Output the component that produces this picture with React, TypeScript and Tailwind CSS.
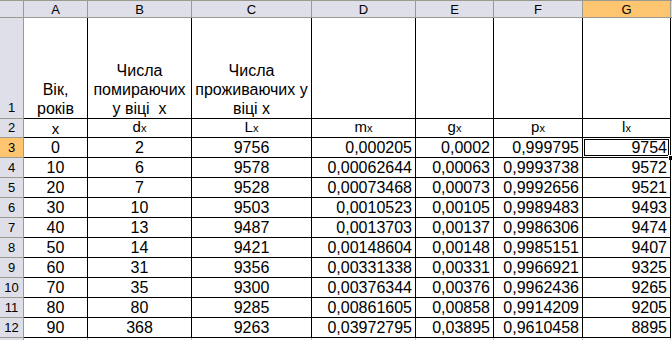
const font = { fontFamily: '"Liberation Sans", Arial, sans-serif' };

const colW = [
  "w-[64px]",
  "w-[104px]",
  "w-[120px]",
  "w-[104px]",
  "w-[78px]",
  "w-[89px]",
  "w-[88px]",
];
const letters = ["A", "B", "C", "D", "E", "F", "G"];

const rows: string[][] = [
  ["0", "2", "9756", "0,000205", "0,0002", "0,999795", "9754"],
  ["10", "6", "9578", "0,00062644", "0,00063", "0,9993738", "9572"],
  ["20", "7", "9528", "0,00073468", "0,00073", "0,9992656", "9521"],
  ["30", "10", "9503", "0,0010523", "0,00105", "0,9989483", "9493"],
  ["40", "13", "9487", "0,0013703", "0,00137", "0,9986306", "9474"],
  ["50", "14", "9421", "0,00148604", "0,00148", "0,9985151", "9407"],
  ["60", "31", "9356", "0,00331338", "0,00331", "0,9966921", "9325"],
  ["70", "35", "9300", "0,00376344", "0,00376", "0,9962436", "9265"],
  ["80", "80", "9285", "0,00861605", "0,00858", "0,9914209", "9205"],
  ["90", "368", "9263", "0,03972795", "0,03895", "0,9610458", "8895"],
];

const sub2 = [
  ["x", ""],
  ["d", "x"],
  ["L", "x"],
  ["m", "x"],
  ["g", "x"],
  ["p", "x"],
  ["l", "x"],
];

function RowHead({ n, active, h }: { n?: number; active?: boolean; h: string }) {
  return (
    <div
      className={`${h} w-[24px] shrink-0 border-r border-b border-[#9a9a8e] flex items-center justify-center text-[13px] ${
        active ? "bg-[#fdc570]" : "bg-[#dedfe9]"
      }`}
    >
      {n}
    </div>
  );
}

export default function App() {
  return (
    <div className="w-[672px] h-[340px] overflow-hidden bg-white text-black" style={font}>
      {/* column headers */}
      <div className="flex h-[18px] border-t border-b border-[#9a9a8e]">
        <div className="w-[24px] shrink-0 bg-[#dedfe9] border-r border-[#9a9a8e]" />
        {letters.map((l, i) => (
          <div
            key={l}
            className={`${colW[i]} shrink-0 border-r border-[#9a9a8e] flex items-center justify-center text-[13px] leading-none ${
              l === "G" ? "bg-[#fdc570]" : "bg-[#dedfe9]"
            }`}
          >
            {l}
          </div>
        ))}
        <div className="flex-1 bg-[#dedfe9]" />
      </div>

      {/* row 1 */}
      <div className="flex h-[101px]">
        <div className="w-[24px] h-full shrink-0 border-r border-b border-[#9a9a8e] bg-[#dedfe9] flex items-end justify-center pb-[1px] text-[13px]">
          1
        </div>
        <div className={`${colW[0]} shrink-0 border-r border-b border-black flex items-end justify-center text-center text-[16px] leading-[19px]`}>
          <span>
            Вік,
            <br />
            років
          </span>
        </div>
        <div className={`${colW[1]} shrink-0 border-r border-b border-black flex items-end justify-center text-center text-[16px] leading-[19px]`}>
          <span className="whitespace-pre">
            Числа
            <br />
            помираючих
            <br />
            {"у віці  х"}
          </span>
        </div>
        <div className={`${colW[2]} shrink-0 border-r border-b border-black flex items-end justify-center text-center text-[16px] leading-[19px]`}>
          <span>
            Числа
            <br />
            проживаючих у
            <br />
            віці х
          </span>
        </div>
        {[3, 4, 5, 6].map((i) => (
          <div key={i} className={`${colW[i]} shrink-0 border-r border-b border-black`} />
        ))}
        <div className="flex-1" />
      </div>

      {/* row 2 */}
      <div className="flex h-[19px]">
        <RowHead n={2} h="h-[19px]" />
        {sub2.map(([m, s], i) => (
          <div
            key={i}
            className={`${colW[i]} shrink-0 border-r border-b border-black flex items-end justify-center text-[15px] leading-[17px]`}
          >
            <span>
              {m}
              {s && <span className="text-[11px]">{s}</span>}
            </span>
          </div>
        ))}
        <div className="flex-1" />
      </div>

      {/* data rows */}
      {rows.map((r, ri) => (
        <div key={ri} className="flex h-[20px]">
          <RowHead n={ri + 3} active={ri === 0} h="h-[20px]" />
          {r.map((v, ci) => (
            <div
              key={ci}
              className={`${colW[ci]} relative shrink-0 border-r border-b border-black text-[16px] leading-[19px] whitespace-nowrap ${
                ci < 3 ? "text-center" : "text-right pr-[3px]"
              }`}
            >
              {v}
              {ri === 0 && ci === 6 && (
                <>
                  <div className="absolute -left-px -top-px -right-px -bottom-px border border-black shadow-[inset_0_0_0_1px_#fff,inset_0_0_0_2px_#000]" />
                  <div className="absolute -right-[4px] -bottom-[4px] w-[6px] h-[6px] bg-black border border-white" />
                </>
              )}
            </div>
          ))}
          <div className="flex-1" />
        </div>
      ))}

      {/* row 13 */}
      <div className="flex h-[20px]">
        <RowHead h="h-[20px]" />
        {colW.map((w, i) => (
          <div key={i} className={`${w} shrink-0 border-r border-[#c8c8c8]`} />
        ))}
      </div>
    </div>
  );
}
